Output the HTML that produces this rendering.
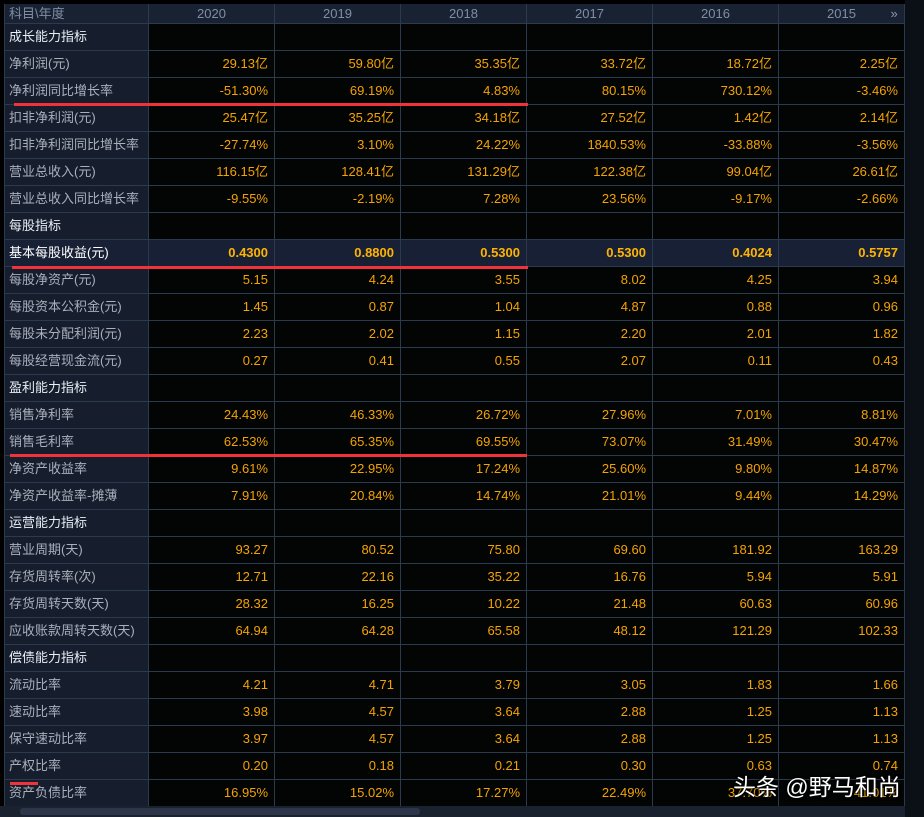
<!DOCTYPE html><html><head><meta charset="utf-8"><style>
body{margin:0;width:924px;height:817px;background:#000;overflow:hidden;position:relative;font-family:"Liberation Sans","Noto Sans CJK SC",sans-serif}
table{position:absolute;left:4px;top:4px;border-collapse:collapse;table-layout:fixed}
td{border:1px solid #2c3a4e;height:26px;padding:0 6px;font-size:13px;color:#f5a300;text-align:right;background:#030404;white-space:nowrap;overflow:hidden;line-height:14px}
td.l{text-align:left;background:#161e2e;color:#a8b0bc;padding-left:4px}
tr.h td{height:19px;background:#192233;color:#7f8ea6;text-align:center;border-top:none;padding-top:0;padding-bottom:0}
tr.s td.l{color:#e8eef6}
tr.b td{background:#182036;font-weight:bold;color:#ffb400}
tr.b td.l{color:#fff;font-weight:normal}
.r{position:absolute;height:3px;background:#f0323a}
</style></head><body>
<div style="position:absolute;left:905px;top:0;width:19px;height:817px;background:#0b0f16"></div>
<table>
<colgroup><col style="width:144px"><col style="width:126px"><col style="width:126px"><col style="width:126px"><col style="width:126px"><col style="width:126px"><col style="width:126px"></colgroup>
<tr class="h"><td class="l" style="background:#192233;color:#7f8ea6;text-align:left">科目\年度</td><td>2020</td><td>2019</td><td>2018</td><td>2017</td><td>2016</td><td>2015<span style="position:absolute;left:886px;color:#8a9ab2">»</span></td></tr>
<tr class="s"><td class="l">成长能力指标</td><td></td><td></td><td></td><td></td><td></td><td></td></tr>
<tr><td class="l">净利润(元)</td><td>29.13亿</td><td>59.80亿</td><td>35.35亿</td><td>33.72亿</td><td>18.72亿</td><td>2.25亿</td></tr>
<tr><td class="l">净利润同比增长率</td><td>-51.30%</td><td>69.19%</td><td>4.83%</td><td>80.15%</td><td>730.12%</td><td>-3.46%</td></tr>
<tr><td class="l">扣非净利润(元)</td><td>25.47亿</td><td>35.25亿</td><td>34.18亿</td><td>27.52亿</td><td>1.42亿</td><td>2.14亿</td></tr>
<tr><td class="l">扣非净利润同比增长率</td><td>-27.74%</td><td>3.10%</td><td>24.22%</td><td>1840.53%</td><td>-33.88%</td><td>-3.56%</td></tr>
<tr><td class="l">营业总收入(元)</td><td>116.15亿</td><td>128.41亿</td><td>131.29亿</td><td>122.38亿</td><td>99.04亿</td><td>26.61亿</td></tr>
<tr><td class="l">营业总收入同比增长率</td><td>-9.55%</td><td>-2.19%</td><td>7.28%</td><td>23.56%</td><td>-9.17%</td><td>-2.66%</td></tr>
<tr class="s"><td class="l">每股指标</td><td></td><td></td><td></td><td></td><td></td><td></td></tr>
<tr class="b"><td class="l">基本每股收益(元)</td><td>0.4300</td><td>0.8800</td><td>0.5300</td><td>0.5300</td><td>0.4024</td><td>0.5757</td></tr>
<tr><td class="l">每股净资产(元)</td><td>5.15</td><td>4.24</td><td>3.55</td><td>8.02</td><td>4.25</td><td>3.94</td></tr>
<tr><td class="l">每股资本公积金(元)</td><td>1.45</td><td>0.87</td><td>1.04</td><td>4.87</td><td>0.88</td><td>0.96</td></tr>
<tr><td class="l">每股未分配利润(元)</td><td>2.23</td><td>2.02</td><td>1.15</td><td>2.20</td><td>2.01</td><td>1.82</td></tr>
<tr><td class="l">每股经营现金流(元)</td><td>0.27</td><td>0.41</td><td>0.55</td><td>2.07</td><td>0.11</td><td>0.43</td></tr>
<tr class="s"><td class="l">盈利能力指标</td><td></td><td></td><td></td><td></td><td></td><td></td></tr>
<tr><td class="l">销售净利率</td><td>24.43%</td><td>46.33%</td><td>26.72%</td><td>27.96%</td><td>7.01%</td><td>8.81%</td></tr>
<tr><td class="l">销售毛利率</td><td>62.53%</td><td>65.35%</td><td>69.55%</td><td>73.07%</td><td>31.49%</td><td>30.47%</td></tr>
<tr><td class="l">净资产收益率</td><td>9.61%</td><td>22.95%</td><td>17.24%</td><td>25.60%</td><td>9.80%</td><td>14.87%</td></tr>
<tr><td class="l">净资产收益率-摊薄</td><td>7.91%</td><td>20.84%</td><td>14.74%</td><td>21.01%</td><td>9.44%</td><td>14.29%</td></tr>
<tr class="s"><td class="l">运营能力指标</td><td></td><td></td><td></td><td></td><td></td><td></td></tr>
<tr><td class="l">营业周期(天)</td><td>93.27</td><td>80.52</td><td>75.80</td><td>69.60</td><td>181.92</td><td>163.29</td></tr>
<tr><td class="l">存货周转率(次)</td><td>12.71</td><td>22.16</td><td>35.22</td><td>16.76</td><td>5.94</td><td>5.91</td></tr>
<tr><td class="l">存货周转天数(天)</td><td>28.32</td><td>16.25</td><td>10.22</td><td>21.48</td><td>60.63</td><td>60.96</td></tr>
<tr><td class="l">应收账款周转天数(天)</td><td>64.94</td><td>64.28</td><td>65.58</td><td>48.12</td><td>121.29</td><td>102.33</td></tr>
<tr class="s"><td class="l">偿债能力指标</td><td></td><td></td><td></td><td></td><td></td><td></td></tr>
<tr><td class="l">流动比率</td><td>4.21</td><td>4.71</td><td>3.79</td><td>3.05</td><td>1.83</td><td>1.66</td></tr>
<tr><td class="l">速动比率</td><td>3.98</td><td>4.57</td><td>3.64</td><td>2.88</td><td>1.25</td><td>1.13</td></tr>
<tr><td class="l">保守速动比率</td><td>3.97</td><td>4.57</td><td>3.64</td><td>2.88</td><td>1.25</td><td>1.13</td></tr>
<tr><td class="l">产权比率</td><td>0.20</td><td>0.18</td><td>0.21</td><td>0.30</td><td>0.63</td><td>0.74</td></tr>
<tr><td class="l">资产负债比率</td><td>16.95%</td><td>15.02%</td><td>17.27%</td><td>22.49%</td><td>37.70%</td><td>41.01%</td></tr>
</table>
<div style="position:absolute;left:0;top:806px;width:905px;height:11px;background:#1a2230"></div>
<div style="position:absolute;left:20px;top:808px;width:400px;height:7px;background:#2c3648;border-radius:3px"></div>
<div class="r" style="left:14px;top:103px;width:514px"></div>
<div class="r" style="left:12px;top:266px;width:516px"></div>
<div class="r" style="left:10px;top:454px;width:517px"></div>
<div class="r" style="left:10px;top:782px;width:28px"></div>
<div style="position:absolute;left:733px;top:768px;font-size:23px;color:#fff;text-shadow:0 0 2px #000,0 0 3px #000">头条 @野马和尚</div>
</body></html>
